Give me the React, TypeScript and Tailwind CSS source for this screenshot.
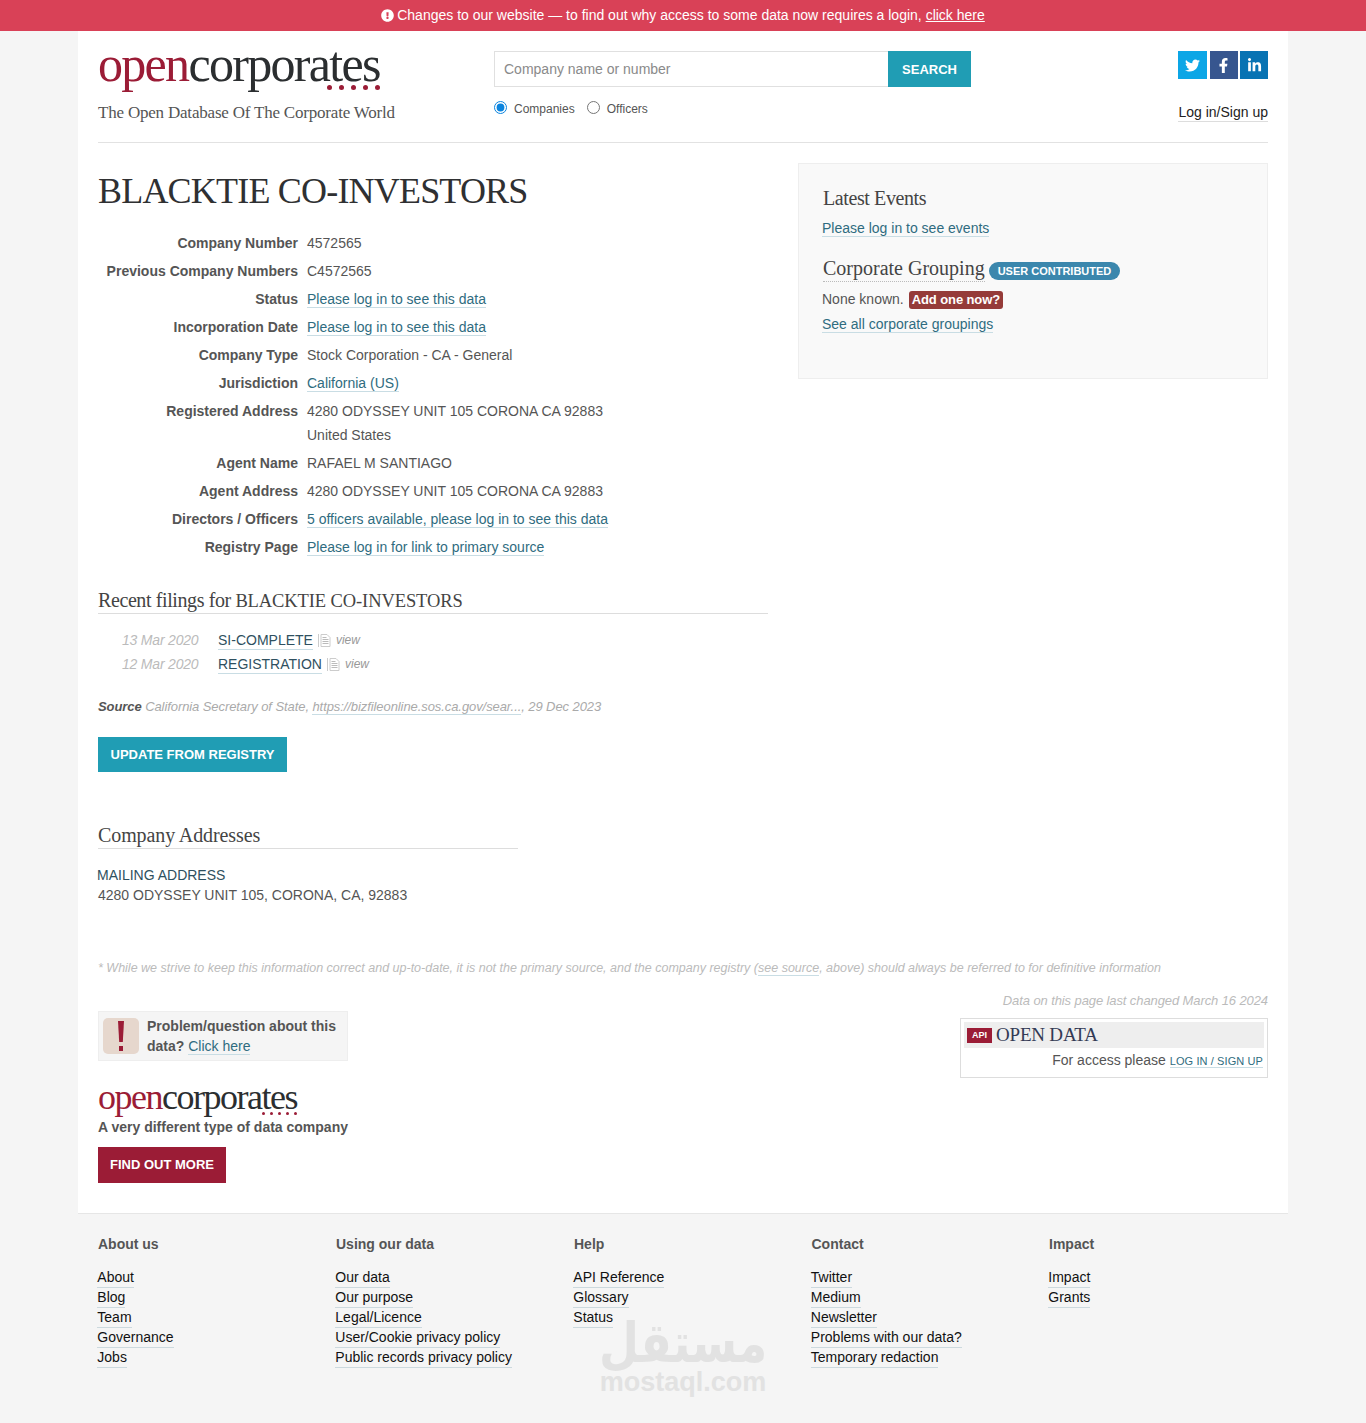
import { FaExclamationCircle, FaFacebookF, FaLinkedinIn, FaTwitter } from "react-icons/fa";

const sans = "font-['Liberation_Sans',Arial,sans-serif]";
const serif = "font-['Liberation_Serif','Times_New_Roman',serif]";

const dataLink = "text-[#2f6c80] border-b border-[#c9dde4]";

function Logo({ big }: { big?: boolean }) {
  return (
    <div className={`${serif} relative w-fit ${big ? "h-[46px] text-[50px] leading-[34px] tracking-[-1.7px]" : "h-[32px] text-[36px] leading-[30px] tracking-[-1.5px]"}`}>
      <span className="text-[#9b1c36]">open</span>
      <span className="text-[#2b2e30]">corporates</span>
      <div className={`absolute right-0 flex ${big ? "top-[38px] gap-[7px]" : "top-[30px] gap-[5px]"}`}>
        {[0, 1, 2, 3, 4].map((i) => (
          <span key={i} className={`rounded-full bg-[#9b1c36] ${big ? "h-[5px] w-[5px]" : "h-[3px] w-[3px]"}`} />
        ))}
      </div>
    </div>
  );
}

function Row({ label, children }: { label: string; children: React.ReactNode }) {
  return (
    <div className="flex">
      <div className="w-[200px] text-right font-bold leading-[28px] text-[#555]">{label}</div>
      <div className="ml-[9px] leading-[28px] text-[#555]">{children}</div>
    </div>
  );
}

function DocIcon() {
  return (
    <svg width="14" height="15" viewBox="0 0 14 15" className="ml-[5px] mr-[4px] inline-block" fill="none" stroke="#bbb" strokeWidth="1">
      <path d="M.5 1v13" stroke="#ccc" />
      <path d="M3 1.5h6l3 3v9H3z" stroke="#ccc" />
      <path d="M4.5 4.5h4M4.5 6.5h6M4.5 8.5h6M4.5 10.5h6" />
    </svg>
  );
}

function Filing({ date, name }: { date: string; name: string }) {
  return (
    <div className="flex items-center">
      <span className="w-[96px] italic tracking-[-0.2px] text-[#bbb]">{date}</span>
      <span className="border-b border-[#c9dde4] leading-[18px] text-[#2f5060]">{name}</span>
      <DocIcon />
      <span className="text-[12px] italic text-[#999]">view</span>
    </div>
  );
}

const footer = [
  { title: "About us", links: ["About", "Blog", "Team", "Governance", "Jobs"] },
  { title: "Using our data", links: ["Our data", "Our purpose", "Legal/Licence", "User/Cookie privacy policy", "Public records privacy policy"] },
  { title: "Help", links: ["API Reference", "Glossary", "Status"] },
  { title: "Contact", links: ["Twitter", "Medium", "Newsletter", "Problems with our data?", "Temporary redaction"] },
  { title: "Impact", links: ["Impact", "Grants"] },
];

export default function App() {
  return (
    <div className={`${sans} relative h-[1423px] overflow-hidden bg-[#f5f5f5] text-[14px] text-[#555]`}>
      <div className="flex h-[31px] items-center justify-center bg-[#d94157] text-[14px] text-white">
        <FaExclamationCircle className="mr-[3px] text-[13px]" />
        <span>
          Changes to our website — to find out why access to some data now requires a login, <span className="underline">click here</span>
        </span>
      </div>

      <div className="mx-auto h-[1182px] w-[1210px] bg-white px-[20px]">
        <header className="flex h-[112px] border-b border-[#e2e2e2]">
          <div className="w-[396px] pt-[16px]">
            <Logo big />
            <div className={`${serif} mt-[7px] text-[17px] tracking-[-0.2px] text-[#555]`}>The Open Database Of The Corporate World</div>
          </div>
          <div className="w-[477px] pt-[20px]">
            <div className="flex h-[36px]">
              <div className="flex w-[394px] items-center border border-r-0 border-[#e0e0e0] pl-[9px] text-[#8a8a8a]">Company name or number</div>
              <div className="flex w-[83px] items-center justify-center bg-[#209db4] pt-[1px] text-[13px] font-bold text-white">SEARCH</div>
            </div>
            <div className="mt-[13px] flex items-center text-[12px] text-[#555]">
              <input type="radio" name="kind" defaultChecked className="m-0 mb-[4px] h-[13px] w-[13px] accent-[#0b84de]" />
              <span className="ml-[7px]">Companies</span>
              <input type="radio" name="kind" className="mb-[4px] ml-[12px] h-[13px] w-[13px]" />
              <span className="ml-[7px]">Officers</span>
            </div>
          </div>
          <div className="flex flex-1 flex-col items-end pt-[20px]">
            <div className="flex gap-[2.5px] text-[15px] text-white">
              <div className="flex h-[28px] w-[29px] items-center justify-center bg-[#0ca6e6]"><FaTwitter /></div>
              <div className="flex h-[28px] w-[28px] items-center justify-center bg-[#37568f]"><FaFacebookF /></div>
              <div className="flex h-[28px] w-[28px] items-center justify-center bg-[#0873b3]"><FaLinkedinIn /></div>
            </div>
            <div className="mt-[25px] border-b border-[#ddd] leading-[17px] text-[#222]">Log in/Sign up</div>
          </div>
        </header>

        <div className="flex">
          <main className="w-[700px]">
            <h1 className={`${serif} mt-[26px] text-[36px] leading-[44px] tracking-[-0.8px] text-[#2f3032]`}>BLACKTIE CO-INVESTORS</h1>
            <div className="mt-[16px]">
              <Row label="Company Number">4572565</Row>
              <Row label="Previous Company Numbers">C4572565</Row>
              <Row label="Status"><span className={dataLink}>Please log in to see this data</span></Row>
              <Row label="Incorporation Date"><span className={dataLink}>Please log in to see this data</span></Row>
              <Row label="Company Type">Stock Corporation - CA - General</Row>
              <Row label="Jurisdiction"><span className={dataLink}>California (US)</span></Row>
              <Row label="Registered Address">
                4280 ODYSSEY UNIT 105 CORONA CA 92883
                <div className="-mt-[4px]">United States</div>
              </Row>
              <Row label="Agent Name">RAFAEL M SANTIAGO</Row>
              <Row label="Agent Address">4280 ODYSSEY UNIT 105 CORONA CA 92883</Row>
              <Row label="Directors / Officers"><span className={dataLink}>5 officers available, please log in to see this data</span></Row>
              <Row label="Registry Page"><span className={dataLink}>Please log in for link to primary source</span></Row>
            </div>

            <h3 className={`${serif} mt-[27px] h-[26px] w-[670px] border-b border-[#ddd] text-[20px] leading-[25px] tracking-[-0.4px] text-[#444]`}>
              Recent filings for <span className="text-[18.5px] tracking-[-0.1px]">BLACKTIE CO-INVESTORS</span>
            </h3>
            <div className="mt-[14px] pl-[24px] leading-[24px]">
              <Filing date="13 Mar 2020" name="SI-COMPLETE" />
              <Filing date="12 Mar 2020" name="REGISTRATION" />
            </div>
            <div className="mt-[22px] text-[13px] italic leading-[18px] tracking-[-0.08px] text-[#aaa]">
              <b className="text-[#555]">Source</b> California Secretary of State, <span className="border-b border-[#c9dde4]">https://bizfileonline.sos.ca.gov/sear...</span>, 29 Dec 2023
            </div>
            <div className="mt-[21px] flex h-[35px] w-[189px] items-center justify-center bg-[#209db4] text-[13px] font-bold text-white">UPDATE FROM REGISTRY</div>

            <h3 className={`${serif} mt-[51px] w-[420px] border-b border-[#ddd] text-[20px] leading-[25px] tracking-[-0.1px] text-[#444]`}>Company Addresses</h3>
            <div className="mt-[16px] leading-[20px]">
              <div className="-ml-px text-[#2f5060]">MAILING ADDRESS</div>
              <div>4280 ODYSSEY UNIT 105, CORONA, CA, 92883</div>
            </div>
          </main>

          <aside className="mt-[20px] h-[216px] w-[470px] border border-[#eee] bg-[#f9f9f9] pl-[24px]">
            <h3 className={`${serif} mt-[21px] text-[20px] leading-[26px] tracking-[-0.4px] text-[#444]`}>Latest Events</h3>
            <div className="-ml-px mt-[8px] leading-[18px]"><span className={dataLink}>Please log in to see events</span></div>
            <div className="mt-[19px] flex items-center">
              <h3 className={`${serif} border-b border-dotted border-[#bbb] text-[20px] leading-[25px] text-[#444]`}>Corporate Grouping</h3>
              <span className="ml-[4px] mt-[3px] rounded-full bg-[#3b87ad] px-[9px] text-[11px] font-bold leading-[18px] text-white">USER CONTRIBUTED</span>
            </div>
            <div className="-ml-px mt-[7px] flex items-center">
              <span>None known.</span>
              <span className="ml-[5px] rounded-[3px] bg-[#953b39] px-[3px] text-[13px] font-bold leading-[18px] tracking-[-0.1px] text-white">Add one now?</span>
            </div>
            <div className="-ml-px mt-[5px] leading-[18px]"><span className={dataLink}>See all corporate groupings</span></div>
          </aside>
        </div>

        <div className="mt-[54px] text-[12.5px] italic leading-[18px] text-[#bbb]">
          * While we strive to keep this information correct and up-to-date, it is not the primary source, and the company registry (<span className="border-b border-[#c9dde4]">see source</span>, above) should always be referred to for definitive information
        </div>

        <div className="flex items-start justify-between">
          <div>
            <div className="mt-[34px] flex h-[50px] w-[250px] items-center border border-[#eee] bg-[#f5f5f5] pl-[4px]">
              <div className="flex h-[36px] w-[36px] shrink-0 items-center justify-center rounded-[5px] bg-[#e6d7cd]">
                <svg width="8" height="32" viewBox="0 0 8 32" fill="#9b1c36">
                  <path d="M1 1h6l-1.2 21H2.2z" />
                  <rect x="2" y="26" width="4" height="5" />
                </svg>
              </div>
              <div className="ml-[8px] font-bold leading-[20px]">
                Problem/question about this data? <span className="font-normal"><span className={dataLink}>Click here</span></span>
              </div>
            </div>
            <div className="mt-[21px]"><Logo /></div>
            <div className="mt-[3px] font-bold leading-[20px]">A very different type of data company</div>
            <div className="mt-[10px] flex h-[36px] w-[128px] items-center justify-center bg-[#9b1c36] text-[13px] font-bold text-white">FIND OUT MORE</div>
          </div>
          <div>
            <div className="mt-[15px] text-right text-[13px] italic leading-[18px] tracking-[-0.1px] text-[#bbb]">Data on this page last changed March 16 2024</div>
            <div className="ml-auto mt-[8px] h-[60px] w-[308px] border border-[#ddd] p-[3px]">
              <div className="flex h-[26px] items-center bg-[#eee] pl-[3px]">
                <span className="flex h-[15px] w-[25px] items-center justify-center bg-[#9b1c36] text-[9px] font-bold leading-none text-white">API</span>
                <span className={`${serif} ml-[4px] text-[19px] tracking-[-0.2px] text-[#333a55]`}>OPEN DATA</span>
              </div>
              <div className="mt-[4px] pr-[1px] text-right leading-[17px]">
                For access please <span className="border-b border-[#c9dde4] text-[11px] tracking-[0.1px] text-[#2f6c80]">LOG IN / SIGN UP</span>
              </div>
            </div>
          </div>
        </div>
      </div>

      <footer className="mx-auto w-[1210px] border-t border-[#e6e6e6] px-[20px]">
        <div className="grid grid-cols-[238px_238px_237.5px_237.5px_1fr]">
          {footer.map((col) => (
            <div key={col.title}>
              <div className="mt-[21px] font-bold leading-[18px]">{col.title}</div>
              <div className="-ml-[0.7px] mt-[15px] flex flex-col items-start">
                {col.links.map((l) => (
                  <span key={l} className="border-b border-[#ccd9de] leading-[19px] text-[#111]">{l}</span>
                ))}
              </div>
            </div>
          ))}
        </div>
      </footer>

      <div className="absolute left-[600px] top-[1317px] flex w-[166px] flex-col items-center font-bold text-[#e2e2e2]">
        <span className="scale-y-[1.2] font-['DejaVu_Sans',sans-serif] text-[46px] leading-[52px]">مستقل</span>
        <span className="text-[27px] leading-[26px]">mostaql.com</span>
      </div>
    </div>
  );
}
